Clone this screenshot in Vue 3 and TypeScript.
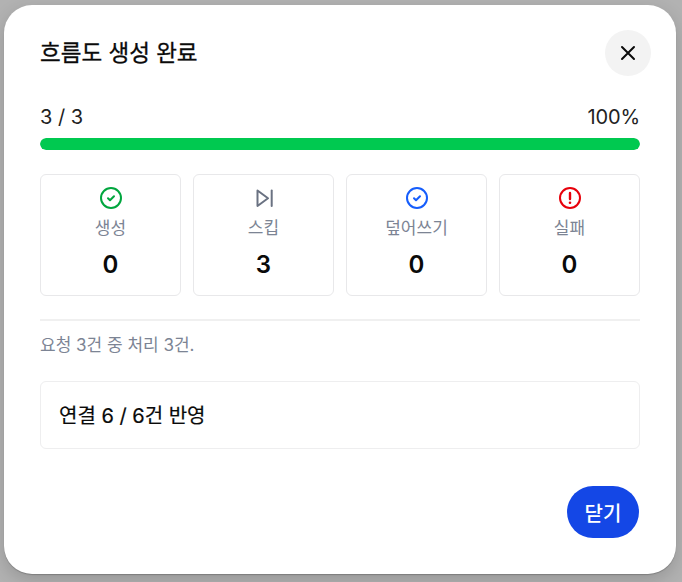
<script setup lang="ts">
interface Stat { label: string; value: number; kind: string }
const stats: Stat[] = [
  { label: '생성', value: 0, kind: 'created' },
  { label: '스킵', value: 3, kind: 'skip' },
  { label: '덮어쓰기', value: 0, kind: 'over' },
  { label: '실패', value: 0, kind: 'fail' },
]
</script>

<template>
  <div class="backdrop">
    <section class="modal">
      <header class="head">
        <h2 class="title">흐름도 생성 완료</h2>
        <button class="close" aria-label="닫기">
          <svg width="24" height="24" viewBox="0 0 24 24" fill="none" stroke="#0a0a0a" stroke-width="2" stroke-linecap="round">
            <path d="M6 6l12 12M18 6L6 18" />
          </svg>
        </button>
      </header>
      <div class="progress-labels"><span>3 / 3</span><span class="pct">100%</span></div>
      <div class="track"><div class="fill" /></div>
      <div class="stats">
        <div v-for="s in stats" :key="s.label" class="stat">
          <svg v-if="s.kind === 'created' || s.kind === 'over'" class="icon" :class="s.kind" viewBox="0 0 24 24" fill="none" stroke="currentColor" stroke-width="2">
            <circle cx="12" cy="12" r="10" />
            <path d="M9 12.2l2 2 4-4" stroke-linecap="round" stroke-linejoin="round" />
          </svg>
          <svg v-else-if="s.kind === 'skip'" class="icon skip" viewBox="0 0 24 24" fill="none" stroke="currentColor" stroke-width="2" stroke-linecap="round" stroke-linejoin="round">
            <path d="M5.5 4.5L16 12.3 5.5 20z" />
            <path d="M19.7 4.5V20" />
          </svg>
          <svg v-else class="icon fail" viewBox="0 0 24 24" fill="none" stroke="currentColor" stroke-width="2">
            <circle cx="12" cy="12" r="10" />
            <path d="M12 7v6" stroke-width="2.4" stroke-linecap="round" />
            <circle cx="12" cy="16.8" r="1.3" fill="currentColor" stroke="none" />
          </svg>
          <div class="label">{{ s.label }}</div>
          <div class="value">{{ s.value }}</div>
        </div>
      </div>
      <hr class="divider" />
      <p class="note">요청 3건 중 처리 3건.</p>
      <div class="links">연결 6 / 6건 반영</div>
      <footer class="foot"><button class="primary">닫기</button></footer>
    </section>
  </div>
</template>

<style>
html, body { margin: 0; background: #b0b0b0; }
</style>

<style scoped>
.backdrop {
  width: 682px;
  height: 582px;
  box-sizing: border-box;
  padding: 5px 6px 8px 4px;
  background: #b2b2b2;
  font-family: Inter, "Noto Sans CJK KR", sans-serif;
  overflow: hidden;
}
.modal {
  position: relative;
  height: 569px;
  box-sizing: border-box;
  padding: 0 36px;
  background: #fff;
  border-radius: 28px;
  box-shadow: 0 6px 18px rgba(0, 0, 0, 0.16), 0 1px 1px rgba(0, 0, 0, 0.2);
  display: flex;
  flex-direction: column;
}
.head { height: 96px; flex: none; }
.title {
  margin: 0;
  padding-top: 33px;
  font-size: 22.5px;
  line-height: 30px;
  font-weight: 400;
  -webkit-text-stroke: 0.3px #0a0a0a;
  color: #0a0a0a;
}
.close {
  position: absolute;
  top: 25px;
  right: 25px;
  width: 46px;
  height: 46px;
  padding: 0;
  border: 0;
  border-radius: 50%;
  background: #f3f3f3;
  display: flex;
  align-items: center;
  justify-content: center;
}
.progress-labels {
  display: flex;
  justify-content: space-between;
  font-size: 20px;
  line-height: 30px;
  color: #222;
  margin-top: 1px;
  height: 36px;
}
.pct { letter-spacing: -0.1px; }
.track { height: 12px; border-radius: 6px; background: #e8e8e8; overflow: hidden; flex: none; }
.fill { width: 100%; height: 100%; background: #00c950; border-radius: 6px; }
.stats {
  display: grid;
  grid-template-columns: repeat(4, 1fr);
  gap: 12px;
  margin-top: 24px;
}
.stat {
  height: 122px;
  box-sizing: border-box;
  border: 1px solid #e8e8ea;
  border-radius: 6px;
  display: flex;
  flex-direction: column;
  align-items: center;
  padding-top: 11px;
}
.icon { width: 24px; height: 24px; flex: none; }
.created { color: #00a63e; }
.skip { color: #6a7282; }
.over { color: #155dfc; }
.fail { color: #e7000b; }
.label { font-size: 17px; line-height: 24px; color: #7c8494; margin-top: 6px; }
.value { font-size: 24px; line-height: 30px; font-weight: 600; color: #0a0a0a; margin-top: 10px; }
.divider { width: 100%; margin: 23px 0 0; border: 0; height: 2px; background: #f0f0f0; flex: none; }
.note { margin: 13px 0 0; font-size: 17px; line-height: 22px; color: #7c8494; }
.links {
  margin-top: 25px;
  height: 68px;
  flex: none;
  box-sizing: border-box;
  border: 1px solid #eeeeef;
  border-radius: 6px;
  padding: 0 18px 2px;
  display: flex;
  align-items: center;
  font-size: 20px;
  font-weight: 400;
  -webkit-text-stroke: 0.2px #0a0a0a;
  color: #0a0a0a;
}
.foot { display: flex; justify-content: flex-end; margin-top: 37px; }
.primary {
  width: 72px;
  height: 52px;
  margin-right: 1px;
  padding: 0;
  border: 0;
  border-radius: 26px;
  background: #1447e6;
  color: #fff;
  font-family: inherit;
  font-size: 20px;
  font-weight: 500;
}
</style>
